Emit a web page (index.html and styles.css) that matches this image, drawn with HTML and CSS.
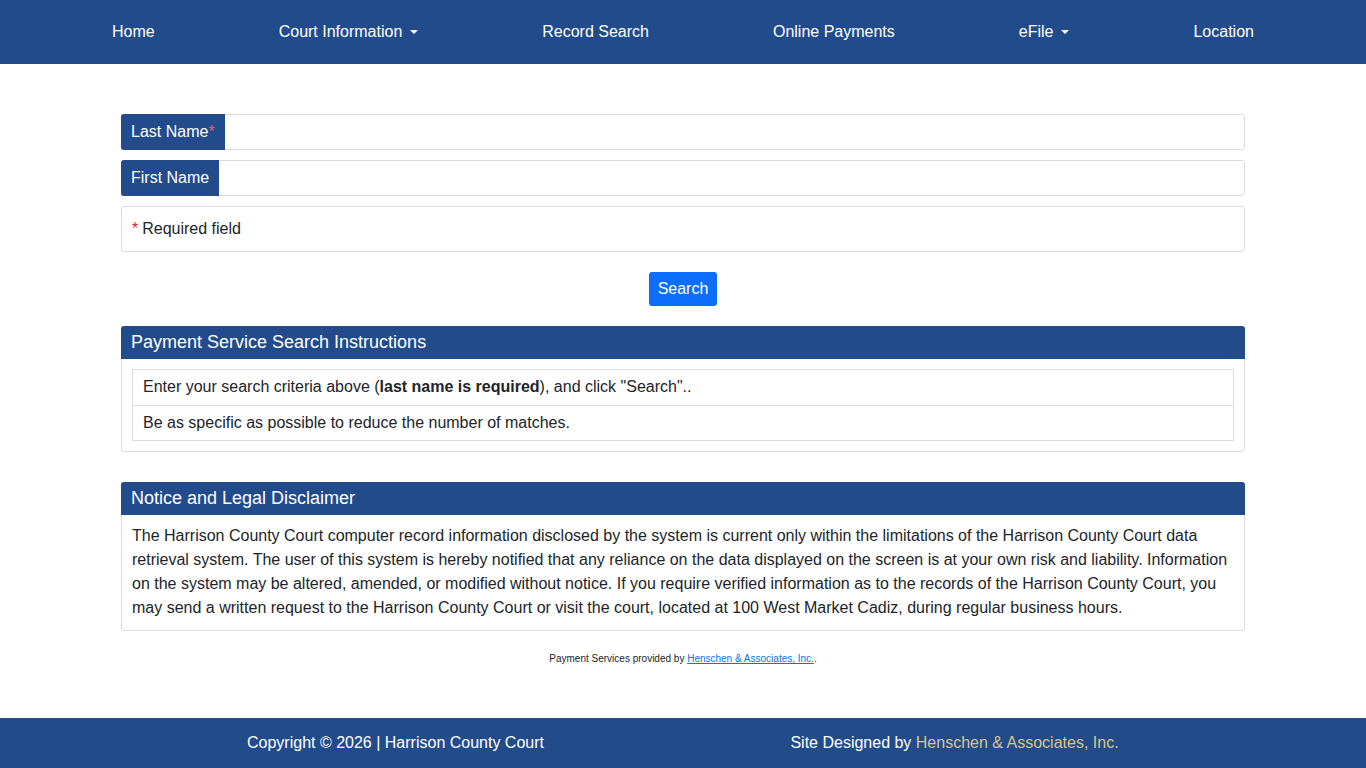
FILE: index.html
```html
<!DOCTYPE html>
<html lang="en">
<head>
    <meta charset="UTF-8">
    <meta name="viewport" content="width=device-width, initial-scale=1.0">
    <title>Payment Service Search - Harrison County Court</title>
    <link rel="stylesheet" href="styles.css">
</head>
<body>
    <nav class="navbar">
        <div class="nav-inner">
            <a href="#" class="nav-link">Home</a>
            <a href="#" class="nav-link dropdown">Court Information</a>
            <a href="#" class="nav-link">Record Search</a>
            <a href="#" class="nav-link">Online Payments</a>
            <a href="#" class="nav-link dropdown">eFile</a>
            <a href="#" class="nav-link">Location</a>
        </div>
    </nav>

    <main class="container">
        <form id="search-form">
            <div class="input-group">
                <label class="input-label" for="last-name">Last Name<span class="req">*</span></label>
                <input type="text" id="last-name" class="form-control">
            </div>
            <div class="input-group">
                <label class="input-label" for="first-name">First Name</label>
                <input type="text" id="first-name" class="form-control">
            </div>
            <div class="note-box"><span class="req">*</span> Required field</div>
            <div class="btn-row">
                <button type="button" class="btn-search">Search</button>
            </div>
        </form>

        <div class="card">
            <div class="card-header">Payment Service Search Instructions</div>
            <div class="card-body">
                <ul class="list-group">
                    <li>Enter your search criteria above (<b>last name is required</b>), and click "Search"..</li>
                    <li>Be as specific as possible to reduce the number of matches.</li>
                </ul>
            </div>
        </div>

        <div class="card">
            <div class="card-header">Notice and Legal Disclaimer</div>
            <div class="card-body text-body">
                The Harrison County Court computer record information disclosed by the system is current only within the limitations of the Harrison County Court data retrieval system. The user of this system is hereby notified that any reliance on the data displayed on the screen is at your own risk and liability. Information on the system may be altered, amended, or modified without notice. If you require verified information as to the records of the Harrison County Court, you may send a written request to the Harrison County Court or visit the court, located at 100 West Market Cadiz, during regular business hours.
            </div>
        </div>

        <p class="provided">Payment Services provided by <a href="#">Henschen &amp; Associates, Inc.</a>.</p>
    </main>

    <footer class="footer">
        <div class="footer-inner">
            <div class="footer-col">Copyright &copy; 2026 | Harrison County Court</div>
            <div class="footer-col">Site Designed by <a href="#" class="gold">Henschen &amp; Associates, Inc.</a></div>
        </div>
    </footer>
</body>
</html>
```

FILE: styles.css
```css
* {
    box-sizing: border-box;
}
body {
    font-family: "Liberation Sans", Arial, sans-serif;
    font-size: 16px;
    color: #212529;
    margin: 0;
    background-color: #fff;
}
a {
    text-decoration: none;
}
.navbar {
    background-color: #224b8b;
    height: 64px;
}
.nav-inner {
    width: 1142px;
    height: 64px;
    margin: 0 auto;
    display: flex;
    justify-content: space-between;
    align-items: center;
}
.nav-link {
    color: #fff;
    font-size: 16px;
    line-height: 24px;
}
.dropdown::after {
    content: "";
    display: inline-block;
    margin-left: 8px;
    vertical-align: 3px;
    border-top: 4px solid #fff;
    border-left: 4px solid transparent;
    border-right: 4px solid transparent;
}
.container {
    width: 1124px;
    margin: 0 auto;
    padding-top: 50px;
}
.input-group {
    display: flex;
    height: 36px;
    margin-bottom: 10px;
    border: 1px solid #dcdcdc;
    border-radius: 3px;
}
.input-label {
    background-color: #224b8b;
    color: #fff;
    padding: 0 10px;
    margin: -1px 0 -1px -1px;
    display: flex;
    align-items: center;
    border-radius: 3px 0 0 3px;
    white-space: nowrap;
}
.form-control {
    flex: 1;
    border: none;
    outline: none;
    font: inherit;
    padding: 0 10px;
    background: transparent;
}
.req {
    color: #e0282d;
}
.input-label .req {
    color: #e85a80;
}
.note-box {
    border: 1px solid #dcdcdc;
    border-radius: 3px;
    height: 46px;
    padding: 0 10px;
    display: flex;
    align-items: center;
    gap: 4px;
}
.btn-row {
    display: flex;
    justify-content: center;
    margin: 20px 0;
}
.btn-search {
    background-color: #0d6efd;
    color: #fff;
    border: none;
    border-radius: 3px;
    font: inherit;
    height: 34px;
    padding: 0 9px;
    cursor: pointer;
}
.card {
    border: 1px solid #dcdcdc;
    border-radius: 3px;
    margin-bottom: 30px;
}
.card-header {
    background-color: #224b8b;
    color: #fff;
    font-size: 18px;
    height: 33px;
    line-height: 32px;
    padding: 0 10px;
    margin: -1px -1px 0 -1px;
    border-radius: 3px 3px 0 0;
}
.card-body {
    padding: 10px;
}
.list-group {
    list-style: none;
    margin: 0;
    padding: 0;
    border: 1px solid #dcdcdc;
}
.list-group li {
    height: 35px;
    line-height: 34px;
    padding: 0 10px;
}
.list-group li + li {
    border-top: 1px solid #dcdcdc;
}
.text-body {
    line-height: 24px;
    padding: 9px 10px 10px;
}
.provided {
    text-align: center;
    font-size: 10px;
    margin: -8px 0 54px;
}
.provided a {
    color: #0d6efd;
    text-decoration: underline;
}
.footer {
    background-color: #224b8b;
    height: 50px;
    color: #fff;
}
.footer-inner {
    width: 1118px;
    height: 50px;
    margin-left: calc(50% - 567px);
    display: flex;
    align-items: center;
}
.footer-col {
    flex: 1;
    text-align: center;
}
.gold {
    color: #d6c58a;
}
```
